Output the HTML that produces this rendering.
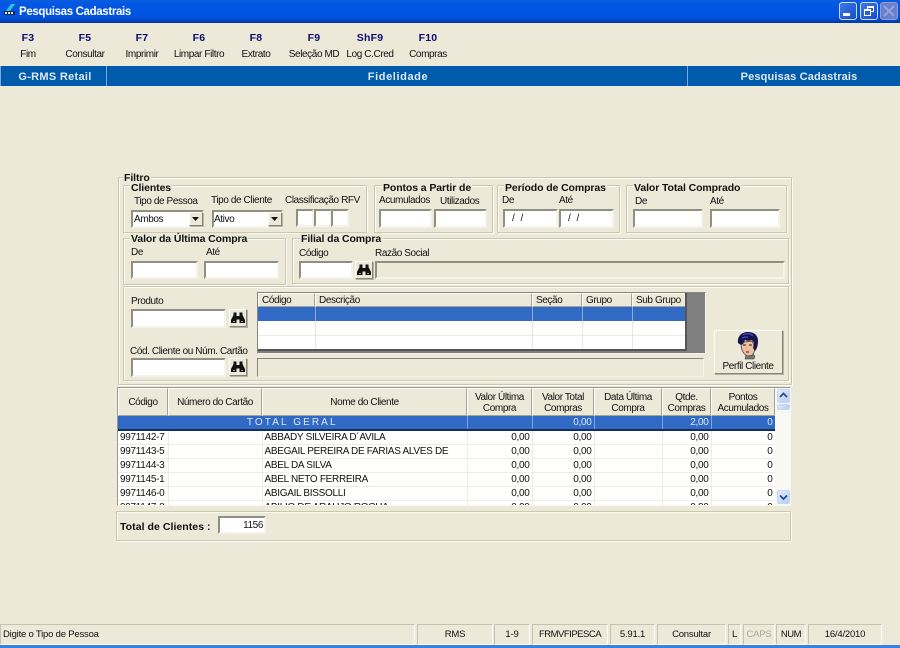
<!DOCTYPE html>
<html><head><meta charset="utf-8">
<style>
html,body{margin:0;padding:0;background:#ECE9D8}
#p{position:relative;width:900px;height:648px;overflow:hidden;background:#ECE9D8;font:10px "Liberation Sans",sans-serif;color:#111;filter:blur(.3px)}
#p div,#p span.t{position:absolute;box-sizing:border-box}
.t{white-space:nowrap;line-height:12px;height:12px;letter-spacing:-.4px}
.c{transform:translateX(-50%)}
.b{font-weight:bold}
.g{border:1px solid #c9c7b5;box-shadow:1px 1px 0 #fbfaf3,inset 1px 1px 0 #fbfaf3}
.l{font-weight:bold;font-size:10.5px;background:#ECE9D8;padding:0 1px;letter-spacing:-.1px}
.i{background:#fff;border:2px solid;border-color:#8f8f82 #f4f3ec #f4f3ec #8f8f82}
.d{background:#ECE9D8}
.btn{background:#ECE9D8;border:1px solid;border-color:#fff #85857a #85857a #fff;box-shadow:1px 1px 0 #b5b3a4}
.f{color:#0c0c70;font-weight:bold;font-size:10.5px;letter-spacing:.2px}
.s{border:1px solid;border-color:#c4c2b0 #fff #fff #c4c2b0;height:21px;top:624px;text-align:center;line-height:19px;font-size:9.5px;letter-spacing:-.2px}
table{border-collapse:collapse;table-layout:fixed;font:10px "Liberation Sans",sans-serif;position:absolute;left:0;top:0}
td{padding:1px 0 0;height:14px;box-sizing:border-box;border-right:1px solid #efede0;border-bottom:1px solid #efede0;overflow:hidden;white-space:nowrap;line-height:12px;letter-spacing:-.3px}
td.n{text-align:right;padding-right:2px}
tr.sel td{background:#316AC5;color:#dfe8f7;border-right:1px solid #7ea2dc;border-bottom:2px solid #12305f;height:14px}
.h{background:#ECE9D8;border:1px solid;border-color:#fff #a5a393 #a5a393 #fff;text-align:center;line-height:11px;font-size:10px;display:flex;align-items:center;justify-content:center;letter-spacing:-.4px;padding-top:1px}
</style></head><body><div id="p">

<!-- Title bar -->
<div style="left:0;top:0;width:900px;height:23px;background:linear-gradient(#0a5fe0 0,#0358e2 3px,#0054e3 12px,#0250d8 18px,#013fb0 22px,#0a2f90 23px)"></div>
<svg style="position:absolute;left:2px;top:3px" width="15" height="15" viewBox="0 0 15 15"><path d="M9 1 L13 1 L8 8 L4 8Z" fill="#27c9d8"/><path d="M2 8h11v4H2z" fill="#0b2a55"/><path d="M3 9h2v2H3zM6 9h2v2H6zM9 9h2v2H9z" fill="#dfe8f0"/></svg>
<span class="t b" style="left:19px;top:5px;color:#fff;font-size:11.5px;height:14px;line-height:14px;letter-spacing:-.35px">Pesquisas Cadastrais</span>
<div style="left:839px;top:2px;width:18px;height:18px;border-radius:3px;border:1px solid #cfdcf5;background:linear-gradient(135deg,#3c78ea,#1a4cc8)"></div>
<div style="left:843px;top:13px;width:7px;height:3px;background:#fff"></div>
<div style="left:860px;top:2px;width:18px;height:18px;border-radius:3px;border:1px solid #cfdcf5;background:linear-gradient(135deg,#3c78ea,#1a4cc8)"></div>
<div style="left:867px;top:6px;width:7px;height:6px;border:1px solid #fff;border-top-width:2px"></div>
<div style="left:864px;top:9px;width:7px;height:7px;border:1px solid #fff;border-top-width:2px;background:#2a5fd8"></div>
<div style="left:880px;top:2px;width:18px;height:18px;border-radius:3px;border:1px solid #8fa0d8;background:#6a7fd0"></div>
<svg style="position:absolute;left:883px;top:5px" width="12" height="12"><path d="M1 1L11 11M11 1L1 11" stroke="#9aa6d8" stroke-width="2"/></svg>

<!-- Toolbar -->
<span class="t f c" style="left:28px;top:32px">F3</span><span class="t c" style="left:28px;top:49px">Fim</span>
<span class="t f c" style="left:85px;top:32px">F5</span><span class="t c" style="left:85px;top:49px">Consultar</span>
<span class="t f c" style="left:142px;top:32px">F7</span><span class="t c" style="left:142px;top:49px">Imprimir</span>
<span class="t f c" style="left:199px;top:32px">F6</span><span class="t c" style="left:199px;top:49px">Limpar Filtro</span>
<span class="t f c" style="left:256px;top:32px">F8</span><span class="t c" style="left:256px;top:49px">Extrato</span>
<span class="t f c" style="left:314px;top:32px">F9</span><span class="t c" style="left:314px;top:49px">Seleção MD</span>
<span class="t f c" style="left:370px;top:32px">ShF9</span><span class="t c" style="left:370px;top:49px">Log C.Cred</span>
<span class="t f c" style="left:428px;top:32px">F10</span><span class="t c" style="left:428px;top:49px">Compras</span>

<!-- Blue bar -->
<div style="left:0;top:66px;width:900px;height:20px;background:#005BAC"></div>
<div style="left:0;top:66px;width:1px;height:20px;background:#7fa8d8"></div>
<div style="left:106px;top:66px;width:1px;height:20px;background:#7fa8d8"></div>
<div style="left:687px;top:66px;width:1px;height:20px;background:#7fa8d8"></div>
<span class="t b c" style="left:55px;top:71px;color:#dfe8f2;font-size:11px;letter-spacing:.3px">G-RMS Retail</span>
<span class="t b c" style="left:398px;top:71px;color:#dfe8f2;font-size:11px;letter-spacing:.6px">Fidelidade</span>
<span class="t b c" style="left:799px;top:71px;color:#dfe8f2;font-size:11px;letter-spacing:.15px">Pesquisas Cadastrais</span>

<!-- Filtro -->
<div class="g" style="left:118px;top:177px;width:674px;height:208px"></div>
<span class="t l" style="left:123px;top:172px">Filtro</span>

<div class="g" style="left:123px;top:185px;width:244px;height:48px"></div>
<span class="t l" style="left:130px;top:182px">Clientes</span>
<span class="t" style="left:134px;top:196px">Tipo de Pessoa</span>
<span class="t" style="left:211px;top:195px">Tipo de Cliente</span>
<span class="t" style="left:285px;top:195px">Classificação RFV</span>
<div class="i" style="left:131px;top:210px;width:73px;height:18px"></div>
<span class="t" style="left:134px;top:214px">Ambos</span>
<div class="btn" style="left:189px;top:212px;width:14px;height:14px"></div>
<svg style="position:absolute;left:192px;top:217px" width="8" height="5"><path d="M0 0h7L3.500 4z" fill="#111"/></svg>
<div class="i" style="left:212px;top:210px;width:71px;height:18px"></div>
<span class="t" style="left:214px;top:214px">Ativo</span>
<div class="btn" style="left:268px;top:212px;width:14px;height:14px"></div>
<svg style="position:absolute;left:271px;top:217px" width="8" height="5"><path d="M0 0h7L3.500 4z" fill="#111"/></svg>
<div class="i" style="left:296px;top:209px;width:18px;height:18px"></div>
<div class="i" style="left:314px;top:209px;width:18px;height:18px"></div>
<div class="i" style="left:331px;top:209px;width:18px;height:18px"></div>

<div class="g" style="left:374px;top:185px;width:119px;height:48px"></div>
<span class="t l" style="left:382px;top:182px">Pontos a Partir de</span>
<span class="t" style="left:379px;top:195px">Acumulados</span>
<span class="t" style="left:440px;top:196px">Utilizados</span>
<div class="i" style="left:379px;top:209px;width:53px;height:19px"></div>
<div class="i" style="left:434px;top:209px;width:53px;height:19px"></div>

<div class="g" style="left:497px;top:185px;width:123px;height:48px"></div>
<span class="t l" style="left:504px;top:182px">Período de Compras</span>
<span class="t" style="left:502px;top:195px">De</span>
<span class="t" style="left:559px;top:195px">Até</span>
<div class="i" style="left:503px;top:209px;width:55px;height:19px"></div>
<span class="t" style="left:512px;top:213px;letter-spacing:1.500px">/ /</span>
<div class="i" style="left:559px;top:209px;width:55px;height:19px"></div>
<span class="t" style="left:568px;top:213px;letter-spacing:1.500px">/ /</span>

<div class="g" style="left:626px;top:185px;width:161px;height:48px"></div>
<span class="t l" style="left:633px;top:182px">Valor Total Comprado</span>
<span class="t" style="left:635px;top:196px">De</span>
<span class="t" style="left:710px;top:196px">Até</span>
<div class="i" style="left:633px;top:209px;width:70px;height:19px"></div>
<div class="i" style="left:710px;top:209px;width:70px;height:19px"></div>

<div class="g" style="left:123px;top:238px;width:163px;height:47px"></div>
<span class="t l" style="left:130px;top:233px">Valor da Última Compra</span>
<span class="t" style="left:131px;top:247px">De</span>
<span class="t" style="left:206px;top:247px">Até</span>
<div class="i" style="left:131px;top:261px;width:67px;height:18px"></div>
<div class="i" style="left:204px;top:261px;width:75px;height:18px"></div>

<div class="g" style="left:292px;top:238px;width:497px;height:46px"></div>
<span class="t l" style="left:300px;top:233px">Filial da Compra</span>
<span class="t" style="left:299px;top:248px">Código</span>
<span class="t" style="left:375px;top:248px">Razão Social</span>
<div class="i" style="left:299px;top:261px;width:54px;height:18px"></div>
<div class="btn" style="left:355px;top:261px;width:18px;height:18px"></div>
<svg style="position:absolute;left:356px;top:263px" width="16" height="14" viewBox="0 0 16 14"><path d="M1 12V9L3.500 4V1.500H6.500V5H9.500V1.500H12.500V4L15 9V12H9.500V8.500H6.500V12Z" fill="#111"/><path d="M3 10.500h2M11 10.500h2" stroke="#9a9a90"/></svg>
<div class="d" style="left:375px;top:261px;width:410px;height:18px;border:2px solid;border-color:#8f8f82 #f4f3ec #f4f3ec #8f8f82"></div>

<div class="g" style="left:123px;top:286px;width:666px;height:95px"></div>
<span class="t" style="left:131px;top:296px">Produto</span>
<div class="i" style="left:131px;top:309px;width:95px;height:19px"></div>
<div class="btn" style="left:229px;top:309px;width:18px;height:18px"></div>
<svg style="position:absolute;left:230px;top:311px" width="16" height="14" viewBox="0 0 16 14"><path d="M1 12V9L3.500 4V1.500H6.500V5H9.500V1.500H12.500V4L15 9V12H9.500V8.500H6.500V12Z" fill="#111"/><path d="M3 10.500h2M11 10.500h2" stroke="#9a9a90"/></svg>
<span class="t" style="left:130px;top:346px">Cód. Cliente ou Núm. Cartão</span>
<div class="i" style="left:131px;top:358px;width:95px;height:19px"></div>
<div class="btn" style="left:229px;top:358px;width:18px;height:18px"></div>
<svg style="position:absolute;left:230px;top:360px" width="16" height="14" viewBox="0 0 16 14"><path d="M1 12V9L3.500 4V1.500H6.500V5H9.500V1.500H12.500V4L15 9V12H9.500V8.500H6.500V12Z" fill="#111"/><path d="M3 10.500h2M11 10.500h2" stroke="#9a9a90"/></svg>

<!-- product grid -->
<div style="left:257px;top:292px;width:449px;height:62px;background:#808080;border:1px solid;border-color:#85857a #f4f3ec #f4f3ec #85857a"></div>
<div style="left:258px;top:293px;width:429px;height:58px;background:#fff;overflow:hidden;border-bottom:2px solid #555;border-right:2px solid #555">
  <div class="h" style="left:0;top:0;width:57px;height:14px;justify-content:flex-start;padding-left:3px">Código</div>
  <div class="h" style="left:57px;top:0;width:217px;height:14px;justify-content:flex-start;padding-left:3px">Descrição</div>
  <div class="h" style="left:274px;top:0;width:50px;height:14px;justify-content:flex-start;padding-left:3px">Seção</div>
  <div class="h" style="left:324px;top:0;width:50px;height:14px;justify-content:flex-start;padding-left:3px">Grupo</div>
  <div class="h" style="left:374px;top:0;width:54px;height:14px;justify-content:flex-start;padding-left:3px">Sub Grupo</div>
  <div style="left:0;top:14px;width:428px;height:14px;background:#316AC5"></div>
  <div style="left:0;top:42px;width:428px;height:1px;background:#efede0"></div>
  <div style="left:57px;top:14px;width:1px;height:43px;background:#d9d6c6;opacity:.6"></div>
  <div style="left:274px;top:14px;width:1px;height:43px;background:#d9d6c6;opacity:.6"></div>
  <div style="left:324px;top:14px;width:1px;height:43px;background:#d9d6c6;opacity:.6"></div>
  <div style="left:374px;top:14px;width:1px;height:43px;background:#d9d6c6;opacity:.6"></div>
</div>
<div class="d" style="left:257px;top:358px;width:447px;height:19px;border:1px solid;border-color:#85857a #f4f3ec #f4f3ec #85857a"></div>

<div class="btn" style="left:714px;top:330px;width:69px;height:44px"></div>
<svg style="position:absolute;left:736px;top:331px" width="26" height="30" viewBox="0 0 26 30"><path d="M10 24l-1 4h9l1-3 -3-3z" fill="#777" stroke="#333" stroke-width=".5"/><path d="M5 13c0 6 3 12 8 12 4 0 6-4 6-9l-3-6-8 1z" fill="#eebf9f" stroke="#3a2a2a" stroke-width=".7"/><path d="M2 12C1 5 6 1 12 1c6 0 10 3 10 9 0 4-1 8-3 10l-2-3 1-5-2-3c-3 1-5 1-7 0l-2 4-2 1z" fill="#16164e"/><path d="M7 4c3-2 7-2 10 1M6 7c2-1 4-1 6-1" stroke="#4a4ac8" stroke-width="1.300" fill="none"/><path d="M7 14h3M13 14h3M10 21h3" stroke="#222"/></svg>
<span class="t c" style="left:748px;top:361px">Perfil Cliente</span>

<!-- Main grid -->
<div style="left:117px;top:387px;width:674px;height:119px;background:#fff;border:1px solid;border-color:#9a9888 #f8f7f0 #f8f7f0 #9a9888;overflow:hidden"></div>
<div class="h" style="left:118px;top:388px;width:50px;height:28px">Código</div>
<div class="h" style="left:168px;top:388px;width:94px;height:28px">Número do Cartão</div>
<div class="h" style="left:262px;top:388px;width:205px;height:28px">Nome do Cliente</div>
<div class="h" style="left:467px;top:388px;width:65px;height:28px">Valor Última<br>Compra</div>
<div class="h" style="left:532px;top:388px;width:62px;height:28px">Valor Total<br>Compras</div>
<div class="h" style="left:594px;top:388px;width:68px;height:28px">Data Última<br>Compra</div>
<div class="h" style="left:662px;top:388px;width:49px;height:28px">Qtde.<br>Compras</div>
<div class="h" style="left:711px;top:388px;width:64px;height:28px">Pontos<br>Acumulados</div>
<div style="left:118px;top:416px;width:657px;height:89px;overflow:hidden;background:#fff">
<table style="width:657px">
<colgroup><col style="width:50px"><col style="width:94px"><col style="width:205px"><col style="width:65px"><col style="width:62px"><col style="width:68px"><col style="width:49px"><col style="width:64px"></colgroup>
<tr class="sel"><td colspan="3" style="text-align:center;letter-spacing:2.1px">TOTAL GERAL</td><td></td><td class="n">0,00</td><td></td><td class="n">2,00</td><td class="n">0</td></tr>
<tr><td style="padding-left:2px">9971142-7</td><td></td><td style="padding-left:2px">ABBADY SILVEIRA D´AVILA</td><td class="n">0,00</td><td class="n">0,00</td><td></td><td class="n">0,00</td><td class="n">0</td></tr>
<tr><td style="padding-left:2px">9971143-5</td><td></td><td style="padding-left:2px">ABEGAIL PEREIRA DE FARIAS ALVES DE</td><td class="n">0,00</td><td class="n">0,00</td><td></td><td class="n">0,00</td><td class="n">0</td></tr>
<tr><td style="padding-left:2px">9971144-3</td><td></td><td style="padding-left:2px">ABEL DA SILVA</td><td class="n">0,00</td><td class="n">0,00</td><td></td><td class="n">0,00</td><td class="n">0</td></tr>
<tr><td style="padding-left:2px">9971145-1</td><td></td><td style="padding-left:2px">ABEL NETO FERREIRA</td><td class="n">0,00</td><td class="n">0,00</td><td></td><td class="n">0,00</td><td class="n">0</td></tr>
<tr><td style="padding-left:2px">9971146-0</td><td></td><td style="padding-left:2px">ABIGAIL BISSOLLI</td><td class="n">0,00</td><td class="n">0,00</td><td></td><td class="n">0,00</td><td class="n">0</td></tr>
<tr><td style="padding-left:2px">9971147-8</td><td></td><td style="padding-left:2px">ABILIO DE ARAUJO ROCHA</td><td class="n">0,00</td><td class="n">0,00</td><td></td><td class="n">0,00</td><td class="n">0</td></tr>
</table>
</div>
<!-- scrollbar -->
<div style="left:775px;top:388px;width:15px;height:117px;background:#f9f9f4"></div>
<div style="left:777px;top:389px;width:13px;height:14px;background:linear-gradient(135deg,#e3ebfb,#b7cdf5);border:1px solid #c6d5f2;border-radius:2px"></div>
<svg style="position:absolute;left:779px;top:392px" width="9" height="7"><path d="M1 5L4.500 1.500L8 5" stroke="#2b4a8e" stroke-width="1.800" fill="none"/></svg>
<div style="left:777px;top:404px;width:13px;height:6px;background:linear-gradient(90deg,#d8e3fa,#b9cef5);border:1px solid #c6d5f2;border-radius:2px"></div>
<div style="left:777px;top:490px;width:13px;height:14px;background:linear-gradient(135deg,#e3ebfb,#b7cdf5);border:1px solid #c6d5f2;border-radius:2px"></div>
<svg style="position:absolute;left:779px;top:494px" width="9" height="7"><path d="M1 1.500L4.500 5L8 1.500" stroke="#2b4a8e" stroke-width="1.800" fill="none"/></svg>

<!-- Total -->
<div class="g" style="left:116px;top:511px;width:675px;height:30px"></div>
<span class="t b" style="left:120px;top:521px;font-size:10.5px;letter-spacing:.05px">Total de Clientes :</span>
<div class="i" style="left:218px;top:516px;width:48px;height:18px"></div>
<span class="t" style="left:218px;top:520px;width:45px;text-align:right">1156</span>

<!-- Status bar -->
<div class="s" style="left:0;width:415px;text-align:left;padding-left:2px">Digite o Tipo de Pessoa</div>
<div class="s" style="left:417px;width:76px">RMS</div>
<div class="s" style="left:494px;width:36px">1-9</div>
<div class="s" style="left:532px;width:76px;letter-spacing:-.5px">FRMVFIPESCA</div>
<div class="s" style="left:610px;width:45px">5.91.1</div>
<div class="s" style="left:657px;width:69px">Consultar</div>
<div class="s" style="left:728px;width:13px">L</div>
<div class="s" style="left:743px;width:32px;color:#a9a898">CAPS</div>
<div class="s" style="left:776px;width:30px;letter-spacing:-.5px">NUM</div>
<div class="s" style="left:808px;width:74px">16/4/2010</div>
<div style="left:0;top:645px;width:900px;height:3px;background:#3a80e4"></div>
</div></body></html>
